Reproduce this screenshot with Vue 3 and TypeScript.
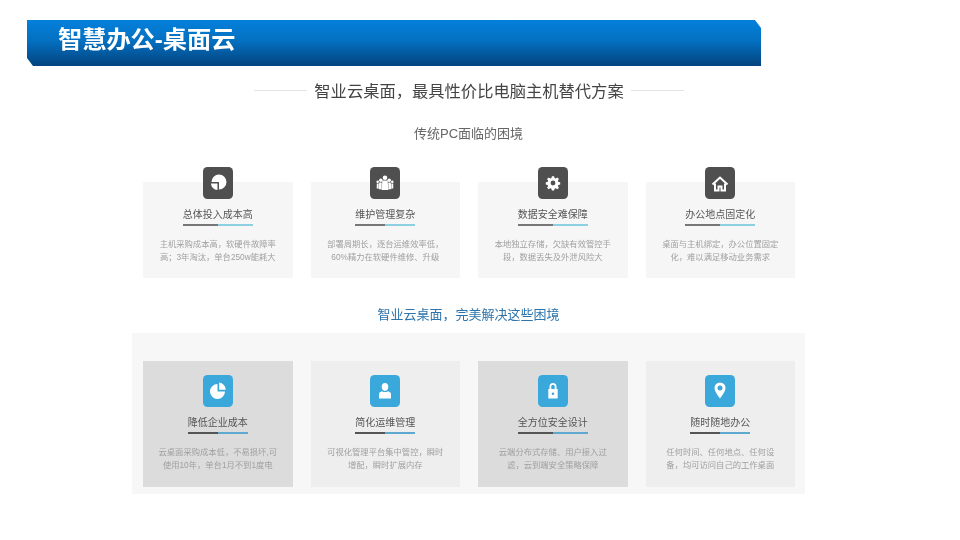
<script setup lang="ts">
interface Card {
  title: string;
  lines: string[];
  icon: string;
  tone?: string;
}

const problems: Card[] = [
  { title: "总体投入成本高", lines: ["主机采购成本高，软硬件故障率", "高；3年淘汰，单台250w能耗大"], icon: "pieLow" },
  { title: "维护管理复杂", lines: ["部署周期长，逐台运维效率低，", "60%精力在软硬件维修、升级"], icon: "people" },
  { title: "数据安全难保障", lines: ["本地独立存储，欠缺有效管控手", "段，数据丢失及外泄风险大"], icon: "gear" },
  { title: "办公地点固定化", lines: ["桌面与主机绑定，办公位置固定", "化，难以满足移动业务需求"], icon: "home" }
];

const solutions: Card[] = [
  { title: "降低企业成本", lines: ["云桌面采购成本低，不易损坏,可", "使用10年，单台1月不到1度电"], icon: "pieHigh", tone: "dark" },
  { title: "简化运维管理", lines: ["可视化管理平台集中管控，瞬时", "增配，瞬时扩展内存"], icon: "user", tone: "light" },
  { title: "全方位安全设计", lines: ["云端分布式存储、用户接入过", "滤，云到端安全策略保障"], icon: "lock", tone: "dark" },
  { title: "随时随地办公", lines: ["任何时间、任何地点、任何设", "备，均可访问自己的工作桌面"], icon: "pin", tone: "light" }
];

const iconPaths: Record<string, string> = {
  pieLow: "M8.500 15A7.500 7.500 0 1 1 16 22.500V15ZM8 16.500h6.500V23A6.500 6.500 0 0 1 8 16.500Z",
  pieHigh: "M14.500 9v7.500H22A7.500 7.500 0 1 1 14.500 9ZM16.200 7.500a7.500 7.500 0 0 1 6.600 7.200h-6.600Z",
  people: "M15 8.400a2.300 2.300 0 1 1 0 4.600a2.300 2.300 0 0 1 0-4.600ZM12.400 13.600h5.200l.9 9.400h-7ZM10.800 11.400a1.800 1.800 0 1 1 0 3.600a1.800 1.800 0 0 1 0-3.600ZM19.200 11.400a1.800 1.800 0 1 1 0 3.600a1.800 1.800 0 0 1 0-3.600ZM9.200 15.400h2.600l-.5 6.800H8.700ZM18.200 15.400h2.600l.5 6.800h-2.600ZM7.700 13.400a1.300 1.300 0 1 1 0 2.600a1.300 1.300 0 0 1 0-2.600ZM22.300 13.400a1.300 1.300 0 1 1 0 2.600a1.300 1.300 0 0 1 0-2.600ZM6.800 16.500h1.900l-.2 4.900H6.700ZM21.300 16.500h1.900l.1 4.900h-1.800Z",
  gear: "M13.880 9.200h2.240l.4 1.840 1.200.48 1.600-1.040 1.600 1.600-1.040 1.600.48 1.200 1.840.4v2.240l-1.840.4-.48 1.200 1.040 1.600-1.600 1.600-1.600-1.040-1.200.48-.4 1.840h-2.240l-.4-1.840-1.200-.48-1.600 1.040-1.600-1.600 1.040-1.600-.48-1.200-1.840-.4v-2.240l1.840-.4.48-1.200-1.040-1.600 1.600-1.600 1.600 1.040 1.200-.48ZM15 13.600a2.400 2.400 0 1 0 0 4.800a2.400 2.400 0 0 0 0-4.800Z",
  user: "M15 8c2.100 0 3.300 1.700 3.300 3.800s-1.200 4.200-3.300 4.200-3.300-2.100-3.300-4.200S12.900 8 15 8ZM12 16.200c1.700 1.200 4.300 1.200 6 0 1.500.5 3 1.300 3 2.900v4.400h-12v-4.400c0-1.600 1.500-2.400 3-2.900Z",
  lock: "M15 8c2.200 0 3.500 1.500 3.500 3.500v2.500h1.200v9.500h-9.400V14h1.200v-2.500C11.500 9.500 12.800 8 15 8ZM15 9.800c-1 0-1.700.7-1.700 1.900V14h3.400v-2.300c0-1.200-.7-1.900-1.700-1.900ZM15 17.500a1.300 1.300 0 1 0 0 2.600a1.300 1.300 0 0 0 0-2.600Z",
  pin: "M15 7.500a5.500 5.500 0 0 1 5.500 5.500c0 3.500-3.300 7.200-5.500 10.500-2.200-3.300-5.500-7-5.500-10.500A5.500 5.500 0 0 1 15 7.500ZM15 10.500a2.500 2.500 0 1 0 0 5a2.500 2.500 0 0 0 0-5Z"
};
</script>

<template>
  <div class="slide">
    <header class="banner">
      <h1>智慧办公-桌面云</h1>
    </header>

    <div class="headline">
      <span class="rule"></span>
      <h2>智业云桌面，最具性价比电脑主机替代方案</h2>
      <span class="rule"></span>
    </div>

    <h3 class="sub-title">传统PC面临的困境</h3>

    <div class="card-grid problems">
      <div v-for="card in problems" :key="card.title" class="card">
        <svg class="icon" viewBox="0 0 30 32" aria-hidden="true">
          <rect width="30" height="32" rx="4.500" fill="#4f4f4f" />
          <path v-if="card.icon !== 'home'" :d="iconPaths[card.icon]" fill="#fff" fill-rule="evenodd" />
          <g v-else fill="none" stroke="#fff" stroke-width="2">
            <path d="M7.500 17.500 15 10.500l7.500 7" />
            <path d="M10 16.500v7h3.500v-4h3v4h3.500v-7" />
          </g>
        </svg>
        <div class="card-title">{{ card.title }}</div>
        <p v-for="line in card.lines" :key="line">{{ line }}</p>
      </div>
    </div>

    <h3 class="answer-title">智业云桌面，完美解决这些困境</h3>

    <div class="panel">
      <div class="card-grid">
        <div v-for="card in solutions" :key="card.title" class="card solved" :class="card.tone">
          <svg class="icon" viewBox="0 0 30 32" aria-hidden="true">
            <rect width="30" height="32" rx="4.500" fill="#3aa8db" />
            <path :d="iconPaths[card.icon]" fill="#fff" fill-rule="evenodd" />
          </svg>
          <div class="card-title">{{ card.title }}</div>
          <p v-for="line in card.lines" :key="line">{{ line }}</p>
        </div>
      </div>
    </div>
  </div>
</template>

<style scoped>
.slide {
  width: 960px;
  height: 540px;
  overflow: hidden;
  padding-top: 20px;
  box-sizing: border-box;
  background: #fff;
  font-family: "Liberation Sans", "Noto Sans CJK SC", sans-serif;
  filter: blur(0.35px);
}

.banner {
  width: 734px;
  height: 46px;
  margin-left: 27px;
  padding: 0 0 6px 31px;
  box-sizing: border-box;
  display: flex;
  align-items: center;
  background: linear-gradient(#0480dc 0%, #0470c0 45%, #03437f 100%);
  clip-path: polygon(0 0, 728px 0, 734px 8px, 734px 46px, 6px 46px, 0 38px);
}

.banner h1 {
  margin: 0;
  color: #fff;
  font-size: 24.200px;
  font-weight: 700;
  line-height: 38px;
}

.headline {
  display: flex;
  align-items: center;
  justify-content: center;
  gap: 7px;
  width: 430px;
  margin: 12px 0 0 254px;
  height: 24px;
}

.headline h2 {
  margin: 0;
  flex: none;
  color: #444;
  font-size: 16.300px;
  font-weight: 400;
  white-space: nowrap;
}

.rule {
  flex: 1;
  height: 1px;
  background: #e4e4e4;
}

.sub-title {
  width: 673px;
  margin: 23px 0 0 132px;
  text-align: center;
  color: #666;
  font-size: 13px;
  font-weight: 400;
  line-height: 18px;
}

.card-grid {
  display: grid;
  grid-template-columns: repeat(4, 149.500px);
  column-gap: 18px;
}

.problems {
  margin: 39px 0 0 143px;
}

.card {
  height: 96px;
  text-align: center;
  background: #f6f6f6;
}

.icon {
  display: block;
  width: 30px;
  height: 32px;
  margin: -15px auto 0;
}

.card-title {
  display: inline-block;
  margin: 9px 0 12px;
  padding-bottom: 5px;
  color: #555;
  font-size: 10px;
  line-height: 13px;
  background: linear-gradient(to right, #777 50%, #8dd0e2 50%) bottom / 100% 2px no-repeat;
}

.card p {
  margin: 0;
  color: #a0a0a0;
  font-size: 8.300px;
  line-height: 13px;
  white-space: nowrap;
}

.answer-title {
  width: 673px;
  margin: 28px 0 0 132px;
  text-align: center;
  color: #2d74ab;
  font-size: 13px;
  font-weight: 400;
  line-height: 18px;
}

.panel {
  width: 673px;
  height: 161px;
  margin: 9px 0 0 132px;
  padding: 28px 0 0 11px;
  box-sizing: border-box;
  background: #f7f7f7;
}

.solved {
  height: 126px;
  padding-top: 14px;
  box-sizing: border-box;
}

.solved .icon {
  margin-top: 0;
}

.solved .card-title {
  background-image: linear-gradient(to right, #555 50%, #5fa8cf 50%);
}

.dark {
  background: #dcdcdc;
}

.light {
  background: #eee;
}
</style>

<style>
html,
body {
  background: #fff;
}
</style>
